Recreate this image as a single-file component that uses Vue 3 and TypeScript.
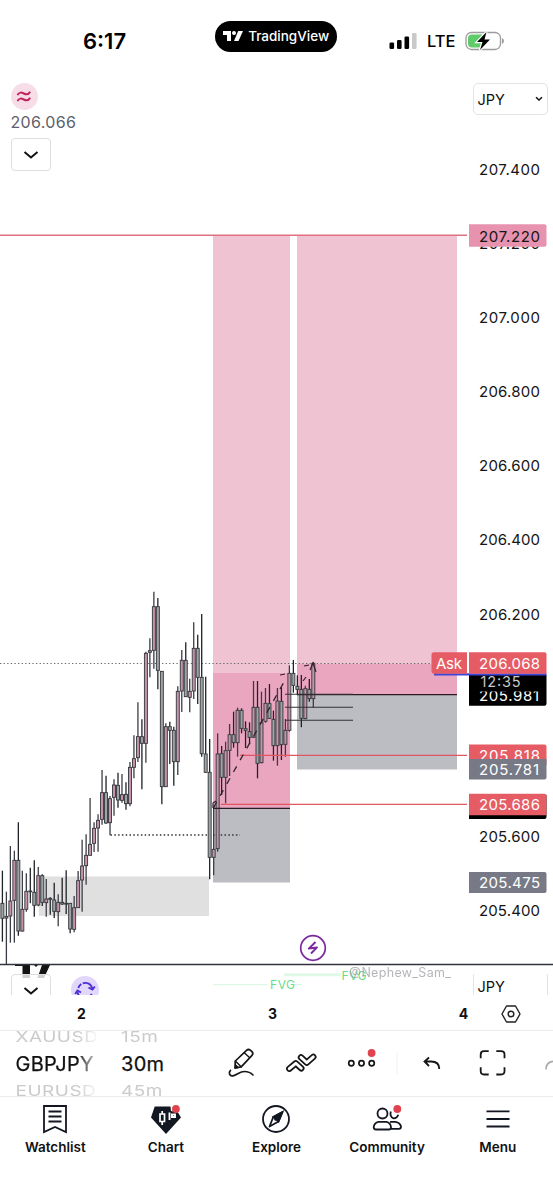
<script setup lang="ts">
type Kind = 'up' | 'down'
// high, low, body top, body bottom, in thirds of a pixel below y = 580
type Row = [number, number, number, number, Kind]

const u: Kind = 'up'
const d: Kind = 'down'

const rows: Row[] = [
  [872, 1085, 970, 1015, d], [935, 1152, 1009, 1014, u], [798, 1088, 963, 1008, u],
  [812, 1088, 841, 961, u], [727, 1067, 841, 1053, d], [872, 1055, 988, 1053, u],
  [880, 995, 934, 988, u], [863, 970, 933, 935, d], [841, 1010, 937, 976, d],
  [861, 979, 887, 975, u], [883, 978, 887, 967, d], [897, 1010, 957, 968, u],
  [952, 1004, 955, 958, d], [908, 1014, 960, 994, d], [943, 1039, 967, 995, u],
  [893, 975, 967, 972, d], [871, 1002, 970, 972, d], [970, 1060, 970, 1047, d],
  [948, 1057, 983, 1048, u], [873, 983, 902, 983, u], [779, 995, 858, 900, u],
  [763, 914, 826, 857, u], [654, 826, 793, 826, u], [727, 816, 745, 790, u],
  [703, 815, 721, 744, u], [570, 734, 638, 718, u], [587, 731, 638, 729, d],
  [648, 766, 656, 728, u], [598, 707, 615, 652, u], [578, 683, 616, 660, d],
  [582, 668, 644, 661, u], [607, 689, 643, 671, d], [546, 679, 562, 671, u],
  [466, 595, 536, 562, u], [367, 546, 470, 533, u], [418, 628, 470, 490, d],
  [215, 548, 220, 490, u], [175, 292, 212, 217, u], [35, 266, 80, 211, u],
  [54, 328, 80, 271, d], [274, 673, 274, 620, d], [430, 620, 440, 620, u],
  [425, 552, 440, 451, d], [440, 617, 451, 545, d], [319, 585, 334, 545, u],
  [210, 396, 241, 333, u], [187, 350, 241, 350, d], [296, 397, 334, 352, u],
  [127, 357, 205, 333, u], [164, 372, 205, 292, d], [102, 530, 292, 521, d],
  [290, 578, 522, 577, d], [477, 898, 577, 832, d], [677, 886, 808, 832, u],
  [460, 815, 522, 806, u], [498, 645, 521, 592, d], [485, 670, 512, 592, u],
  [432, 588, 464, 511, u], [395, 503, 464, 488, d], [383, 530, 391, 488, u],
  [385, 460, 391, 445, d], [424, 504, 446, 451, d], [427, 492, 455, 472, d],
  [303, 472, 382, 472, u], [303, 595, 382, 550, d], [335, 550, 428, 548, u],
  [324, 428, 370, 424, u], [312, 417, 371, 415, d], [392, 542, 418, 497, d],
  [324, 557, 363, 497, u], [322, 540, 364, 494, d], [417, 530, 451, 493, u],
  [256, 455, 280, 451, u], [240, 338, 280, 316, d], [286, 344, 319, 328, d],
  [285, 442, 328, 415, d], [317, 418, 326, 416, u], [297, 365, 328, 356, d],
  [246, 383, 250, 356, u],
]

const candles = rows.map(([high, low, top, bottom, kind], i) => ({
  x: 2.4 + i * 3.986,
  high: 580 + high / 3,
  low: 580 + low / 3,
  top: 580 + top / 3,
  height: Math.max((bottom - top) / 3, 0.8),
  kind,
}))

const scale = [
  { y: 169.5, t: '207.400' }, { y: 243.5, t: '207.200' }, { y: 317.6, t: '207.000' },
  { y: 391.7, t: '206.800' }, { y: 465.8, t: '206.600' }, { y: 539.9, t: '206.400' },
  { y: 614, t: '206.200' }, { y: 836.2, t: '205.600' }, { y: 910.2, t: '205.400' },
]

const tabs = ['Watchlist', 'Chart', 'Explore', 'Community', 'Menu']
</script>

<template>
  <div class="phone">
    <header class="status">
      <div class="clock">6:17</div>
      <div class="island">
        <svg width="20" height="10" viewBox="0 0 20 10" fill="#fff">
          <path d="M0 0H8V10H4V4H0Z" /><circle cx="11" cy="2" r="2" /><path d="M15.200 0H20L15.500 10H11Z" />
        </svg>
        <span>TradingView</span>
      </div>
      <div class="signal">
        <svg width="28" height="18" viewBox="0 0 28 18">
          <rect x="0.500" y="10.500" width="4.600" height="6.500" rx="1.300" /><rect x="8" y="8" width="4.600" height="9" rx="1.300" />
          <rect x="15.500" y="4.500" width="4.600" height="12.500" rx="1.300" /><rect x="23" y="1" width="4.600" height="16" rx="1.300" fill="#c9c9cb" />
        </svg>
        <span class="lte">LTE</span>
        <svg class="battery" width="40" height="20" viewBox="0 0 40 20">
          <rect x="1" y="1.500" width="34.500" height="17" rx="5.500" fill="none" stroke="#9c9c9e" stroke-width="1.300" />
          <path d="M37 7Q39 8 39 10T37 13Z" fill="#9c9c9e" />
          <path d="M7 3.500H17V16.500H7Q3 16.500 3 12.500V7.500Q3 3.500 7 3.500Z" fill="#5fcb6b" />
          <path d="M21.500 1L12 11H17.500L15 19L25 8.500H19.500Z" stroke="#fff" stroke-width="2.400" paint-order="stroke" />
        </svg>
      </div>
    </header>

    <main class="chart">
      <svg class="plot" width="553" height="920" viewBox="0 75 553 920">
        <rect x="39" y="876.500" width="170" height="39.500" fill="#e0e0e0" />
        <rect x="213" y="235" width="77" height="438" fill="#efc3d1" />
        <rect x="213" y="673" width="77" height="135" fill="#eaa5bf" />
        <rect x="213" y="808" width="77" height="74.500" fill="#bbbdc2" />
        <rect x="297" y="235" width="160" height="428.500" fill="#efc3d1" />
        <rect x="297" y="663.500" width="160" height="31" fill="#eaa5bf" />
        <rect x="297" y="694.500" width="160" height="75" fill="#bbbdc2" />

        <path d="M0 235.200H467" stroke="#df7181" stroke-width="1.600" />
        <path d="M0 663.500H431" stroke="#666" stroke-width="1.100" stroke-dasharray="1.300 2.300" />
        <path d="M110.500 835H240" stroke="#333" stroke-width="1.500" stroke-dasharray="1.500 2.300" />

        <g v-for="(c, i) in candles" :key="i" :class="c.kind">
          <line :x1="c.x" :x2="c.x" :y1="c.high" :y2="c.low" class="wick" />
          <rect :x="c.x - 1.500" :y="c.top" width="3" :height="c.height" class="body" />
        </g>

        <path d="M240 755.300H467M221 804.300H467" stroke="#e25563" stroke-width="1.200" fill="none" />
        <path d="M213 808.300H290M297 694.700H457" stroke="#2b1c24" stroke-width="1.300" />
        <path d="M285 694.200H353M285 707.300H353M285 720.300H353" stroke="#333" stroke-width="1.100" />
        <path d="M213 808.500L284 682" stroke="#30242b" stroke-width="1.300" stroke-dasharray="6.500 7.100" stroke-dashoffset="-1" fill="none" />
        <path d="M213 808V803L216 801M280 675L285 674M303 681L306 677M304 666L309 665M310 670L313 663L316 672" stroke="#30242b" stroke-width="1.200" fill="none" />

        <g fill="none" stroke="#7b29a1" stroke-width="1.700">
          <circle cx="313" cy="948" r="12.300" fill="#fff" />
          <path d="M315.500 942L308.800 948.600L317 947.400L311 953.500" stroke-width="2" stroke-linejoin="round" />
        </g>

        <g fill="#131313">
          <path d="M15 965H30V978H22.500V966H15ZM34 965H38L36 967ZM42 965H50L44 978H37.500Z" />
        </g>
        <path d="M0 964.500H553" stroke="#30343a" stroke-width="1.300" />
        <path d="M213 984.700H268M295 984.700H302" stroke="#d6f5df" stroke-width="1" />
        <path d="M284 974.700H341" stroke="#e0f8e7" stroke-width="3" />
        <text x="270" y="989.300" textLength="25" class="fvg">FVG</text>
        <text x="341.500" y="979.500" textLength="25" class="fvg">FVG</text>
        <text x="349" y="977" textLength="102" class="watermark">@Nephew_Sam_</text>

        <g class="prices">
          <text v-for="s in scale" :key="s.t" x="479" :y="s.y + 5.500" textLength="61">{{ s.t }}</text>
        </g>

        <path d="M469 224.300H544.500Q546.500 224.300 546.500 226.300V245Q546.500 246.700 544.500 246.700H469Z" fill="#e792ae" />
        <text x="479" y="242.300" textLength="61" class="price">207.220</text>

        <path d="M469 675H546.500V703.500Q546.500 705.700 544.500 705.700H469Z" fill="#000" />
        <text x="479" y="701.300" textLength="60" class="price light">205.981</text>
        <rect x="470" y="675" width="75" height="16.500" fill="#000" />
        <text x="480.500" y="687" textLength="40" class="price count">12:35</text>
        <path d="M434 674.300H546.500" stroke="#3c46d8" stroke-width="2.200" />
        <path d="M434 652.300H467V673.700H434Q431.500 673.700 431.500 671V655Q431.500 652.300 434 652.300Z" fill="#e65c64" />
        <path d="M469 652.300H544.500Q546.500 652.300 546.500 654.300V673.700H469Z" fill="#e65c64" />
        <text x="436" y="669" textLength="26" class="price light">Ask</text>
        <text x="479" y="669" textLength="61" class="price light">206.068</text>

        <path d="M469 744.600H544.500Q546.500 744.600 546.500 746.600V765H469Z" fill="#e65c64" />
        <text x="479" y="760.700" textLength="61" class="price light">205.818</text>
        <path d="M469 759H546.500V777.500Q546.500 779.500 544.500 779.500H469Z" fill="#777a86" />
        <text x="479" y="775" textLength="60" class="price light">205.781</text>

        <path d="M469 795H546.500V817Q546.500 819 544.500 819H469Z" fill="#000" />
        <path d="M469 793.700H544.500Q546.500 793.700 546.500 795.700V815.200H469Z" fill="#e65c64" />
        <text x="479" y="810.300" textLength="61" class="price light">205.686</text>
        <path d="M469 872H544.500Q546.500 872 546.500 874V891Q546.500 893 544.500 893H469Z" fill="#777a86" />
        <text x="479" y="888.300" textLength="61" class="price light">205.475</text>
      </svg>

      <div class="overlay">
        <div class="legend">
          <div class="approx">
            <svg width="16" height="14" viewBox="0 0 16 14" fill="none" stroke="#c2255c" stroke-width="2">
              <path d="M1.500 5.200C3 1.500 6 2.600 7.800 3.500S12.500 4.800 14.200 1.800M1.500 11.200C3 7.500 6 8.600 7.800 9.500S12.500 10.800 14.200 7.800" />
            </svg>
          </div>
          <div class="last">206.066</div>
          <div class="toggle">
            <svg width="16" height="10" viewBox="0 0 16 10"><path d="M1.500 2L8 7.500L14.500 2" class="chev" /></svg>
          </div>
        </div>
        <div class="currency">
          <span>JPY</span>
          <svg width="8" height="6" viewBox="0 0 8 6"><path d="M1 1.300L4 4L7 1.300" class="chev small" /></svg>
        </div>
      </div>

      <div class="overlay lower">
        <div class="lower-left">
          <div class="toggle">
            <svg width="16" height="10" viewBox="0 0 16 10"><path d="M1.500 2L8 7.500L14.500 2" class="chev" /></svg>
          </div>
          <svg class="sync" width="28" height="28" viewBox="0 0 28 28" fill="none" stroke="#4d2fd1" stroke-width="1.900">
            <circle cx="14" cy="14" r="14" fill="#e1d7fb" stroke="none" />
            <path d="M7.300 12A7.200 7.200 0 0 1 21.300 13" stroke-dasharray="5 1.500 12 1.500" />
            <path d="M6.500 16A7.500 7.500 0 0 0 20.700 18" />
            <path d="M17.500 11.500L21.500 13.500L23.800 10.500M4.200 18L6.500 14.500L10 16.500" />
          </svg>
        </div>
        <div class="currency"><span>JPY</span></div>
      </div>
    </main>

    <div class="time-axis">
      <span>2</span><span>3</span><span>4</span>
      <svg width="20" height="18" viewBox="0 0 20 18" fill="none" stroke="#222" stroke-width="1.400">
        <path d="M5.500 1H14.500L19 9L14.500 17H5.500L1 9Z" stroke-linejoin="round" /><circle cx="10" cy="9" r="2.800" />
      </svg>
    </div>

    <div class="toolbar">
      <div class="wheel symbols"><span class="ghost">XAUUSD</span><b>GBPJPY</b><span class="ghost">EURUSD</span></div>
      <div class="wheel interval"><span class="ghost">15m</span><b>30m</b><span class="ghost">45m</span></div>
      <svg class="tools" width="370" height="65" viewBox="183 1031 370 65" fill="none" stroke="#161616" stroke-width="1.700" stroke-linejoin="round" stroke-linecap="round">
        <path d="M235.300 1061L246.500 1050.300Q248.500 1048.700 250.500 1050.300L252 1051.700Q253.700 1053.500 252 1055.400L241.200 1066.800L235 1068Z" />
        <path d="M235.300 1061L241.200 1066.800M244.500 1053L249.500 1057.500" stroke-width="1.400" />
        <path d="M235 1068L235.700 1064.700L238.500 1067.300Z" fill="#161616" stroke-width="1" />
        <path d="M230.500 1070.300C228.200 1072.500 229.500 1076.500 233 1075.800C237 1075.200 239.500 1071.500 244.500 1071.500C248.500 1071.500 251 1073 253 1075" />
        <path class="chunk" d="M289.300 1068.700L295.800 1063.300L301.300 1068.300" />
        <path class="chunk-core" d="M289.300 1068.700L295.800 1063.300L301.300 1068.300" />
        <path class="chunk" d="M301 1057.400L306.800 1062.700L313.300 1056.900" />
        <path class="chunk-core" d="M301 1057.400L306.800 1062.700L313.300 1056.900" />
        <g stroke-width="1.700"><circle cx="351.300" cy="1063.200" r="2.600" /><circle cx="361.500" cy="1063.200" r="2.600" /><circle cx="371.700" cy="1063.200" r="2.600" /></g>
        <circle cx="371.600" cy="1053" r="3.900" fill="#e0434f" stroke="none" />
        <path d="M397 1053V1074" stroke="#f1f1f1" stroke-width="1" />
        <path d="M429 1057.500L424.500 1061.500L429 1066M425 1061.500H431Q439.300 1061.500 439.300 1069" stroke-width="1.800" stroke-linejoin="miter" stroke-linecap="butt" />
        <path d="M480.700 1058.300V1054.500Q480.700 1051.200 484 1051.200H488.700M496.300 1051.200H501Q504.500 1051.200 504.500 1054.500V1058.300M504.500 1067.300V1071Q504.500 1074.500 501 1074.500H496.300M488.700 1074.500H484Q480.700 1074.500 480.700 1071V1067.300" stroke-width="1.800" stroke-linecap="butt" />
        <path d="M546 1069.500Q546 1062 553 1061.300" stroke="#aaa" stroke-width="1.700" stroke-linecap="butt" />
      </svg>
    </div>

    <nav class="tabs">
      <div v-for="t in tabs" :key="t" class="tab">
        <svg width="32" height="32" viewBox="0 0 32 32" fill="none" stroke="#131722" stroke-width="1.800">
          <g v-if="t === 'Watchlist'">
            <path d="M5 4H27V30L16 25L5 30Z" /><path d="M9.500 9.500H22.500M9.500 14.500H22.500M9.500 19.500H22.500" />
          </g>
          <g v-else-if="t === 'Chart'">
            <path d="M4.700 4.500H20.500L21 9L28 10.500L31 15.500L16 32L1 15.500Z" fill="#131722" stroke="none" />
            <path d="M10 12H14.500V19.500H10ZM12.200 9V12M12.200 19.500V23" stroke="#fff" stroke-width="1.700" />
            <path d="M19.500 10.500V18M22 12.500H25V15H22Z" stroke="#fff" stroke-width="1.900" />
            <circle cx="25.900" cy="7" r="3.900" fill="#e0434f" stroke="none" />
          </g>
          <g v-else-if="t === 'Explore'">
            <circle cx="16" cy="17" r="13" />
            <path d="M22.500 10L18.500 19.500L9.500 24.500L13.300 15Z" stroke-linejoin="round" /><path d="M22.500 10L18.500 19.500L13.300 15Z" fill="#131722" />
            <circle cx="15.600" cy="17.500" r="1.300" fill="#131722" stroke="none" />
          </g>
          <g v-else-if="t === 'Community'">
            <circle cx="11.500" cy="11.500" r="5" />
            <path d="M7.500 19.800H15.500Q19.500 20.500 20 25Q20 27.500 18 27.500H5Q2.700 27.500 2.700 25Q3.300 20.500 7.500 19.800Z" />
            <path d="M19.800 9.500Q18.500 15 22.500 16.300Q26 16.300 27.300 12.700M19 19.800H24.500Q29 20.500 30 24.500Q30 26.800 28 26.800H20" />
            <circle cx="26.300" cy="7" r="3.900" fill="#e0434f" stroke="none" />
          </g>
          <path v-else d="M4.500 9.300H27.500M4.500 17H27.500M4.500 24.500H27.500" />
        </svg>
        <span>{{ t }}</span>
      </div>
    </nav>
  </div>
</template>

<style>
body { margin: 0; background: #fff; }
</style>

<style scoped>
.phone {
  width: 553px;
  height: 1200px;
  overflow: hidden;
  display: flex;
  flex-direction: column;
  background: #fff;
  color: #111;
  font-family: Inter, "Liberation Sans", sans-serif;
}
.phone svg { display: block; flex: none; }
.status {
  box-sizing: border-box;
  height: 75px;
  padding: 21px 48px 0 83px;
  display: flex;
  align-items: flex-start;
}
.clock { width: 132.500px; padding-top: 6px; font-size: 22px; line-height: 28px; font-weight: 600; color: #000; }
.island {
  width: 122px;
  height: 30.500px;
  border-radius: 16px;
  background: #000;
  color: #fff;
  display: flex;
  align-items: center;
  justify-content: center;
  gap: 5px;
  font-size: 13.500px;
  font-weight: 500;
}
.signal { display: flex; align-items: center; margin: 10px 0 0 52px; color: #000; }
.lte { width: 38px; margin-left: 10px; font-size: 16.500px; line-height: 20px; font-weight: 500; }
.chart { position: relative; height: 920px; flex: none; overflow: hidden; }
.overlay {
  position: absolute;
  inset: 0 0 auto 0;
  display: flex;
  justify-content: space-between;
  padding: 8px 5.500px 0 10.500px;
}
.approx {
  width: 27px;
  height: 27px;
  border-radius: 50%;
  background: #f7dde7;
  display: flex;
  align-items: center;
  justify-content: center;
}
.last { margin: 3px 0 6px; font-size: 16px; line-height: 19px; letter-spacing: 0.350px; color: #5d606b; }
.toggle {
  box-sizing: border-box;
  width: 40px;
  height: 33px;
  border: 1.500px solid #dedede;
  border-radius: 4px;
  background: rgba(255, 255, 255, 0.8);
  display: flex;
  align-items: center;
  justify-content: center;
}
.chev { fill: none; stroke: #111; stroke-width: 2; }
.chev.small { stroke-width: 1.500; }
.currency {
  box-sizing: border-box;
  width: 75px;
  height: 32px;
  border: 1px solid #e3e3e3;
  border-radius: 5px;
  background: #fff;
  padding: 0 4px;
  display: flex;
  align-items: center;
  justify-content: space-between;
  font-size: 14.500px;
}
.lower { inset: auto 0 0 0; height: 21px; padding-top: 0; overflow: hidden; }
.lower .toggle { flex: none; }
.lower .currency { height: 30px; margin-top: -3px; flex: none; }
.lower-left { display: flex; gap: 20px; }
.sync { margin-top: 2px; }
.wick { stroke: #1f2226; stroke-width: 1.300; }
.body { stroke: #34373b; stroke-width: 0.900; fill: #a0a3a5; }
.up .wick { stroke: #3a3d44; }
.up .body { fill: #c394aa; }
.prices text, .price { font-size: 15px; fill: #151515; }
.price.light { fill: #fff; }
.price.count { fill: #c9c9c9; font-size: 14.500px; }
.fvg { font-size: 12px; fill: #69dc8b; }
.watermark { font-size: 12.500px; fill: #8c8f96; opacity: 0.65; }
.time-axis {
  height: 35px;
  flex: none;
  display: flex;
  align-items: center;
  text-align: center;
  font-size: 14px;
  font-weight: 700;
}
.time-axis span { width: 20px; margin-left: 71.500px; padding-top: 2px; }
.time-axis span + span { margin-left: 171px; }
.time-axis svg { margin: 2px 0 0 27.500px; }
.toolbar {
  box-sizing: border-box;
  height: 67px;
  flex: none;
  border-top: 1px solid #ededed;
  border-bottom: 1px solid #ededed;
  display: flex;
}
.wheel {
  height: 65px;
  overflow: hidden;
  display: flex;
  flex-direction: column;
  align-items: flex-start;
  white-space: nowrap;
  font-size: 20px;
}
.wheel b { font-weight: 400; line-height: 30px; height: 29px; letter-spacing: 0.300px; -webkit-text-stroke: 0.250px currentColor; }
.ghost { height: 18px; line-height: 12px; font-size: 19px; letter-spacing: 0.500px; color: #cbcbcd; transform: scaleY(0.780); transform-origin: 0 50%; }
.ghost:last-child { line-height: 27px; }
.symbols { width: 80px; margin-left: 15.500px; mask-image: linear-gradient(90deg, #000 76%, transparent 106%); }
.interval { width: 61px; margin-left: 25.500px; }
.tools { margin-left: 1px; }
.chunk { stroke-width: 6.400; }
.chunk-core { stroke: #fff; stroke-width: 2.900; }
.tabs { display: grid; grid-template-columns: repeat(5, 1fr); flex: 1; }
.tab { display: flex; flex-direction: column; align-items: center; padding-top: 5px; font-size: 13.500px; font-weight: 600; line-height: 18px; }
.tab span { margin-top: 4px; }
</style>
